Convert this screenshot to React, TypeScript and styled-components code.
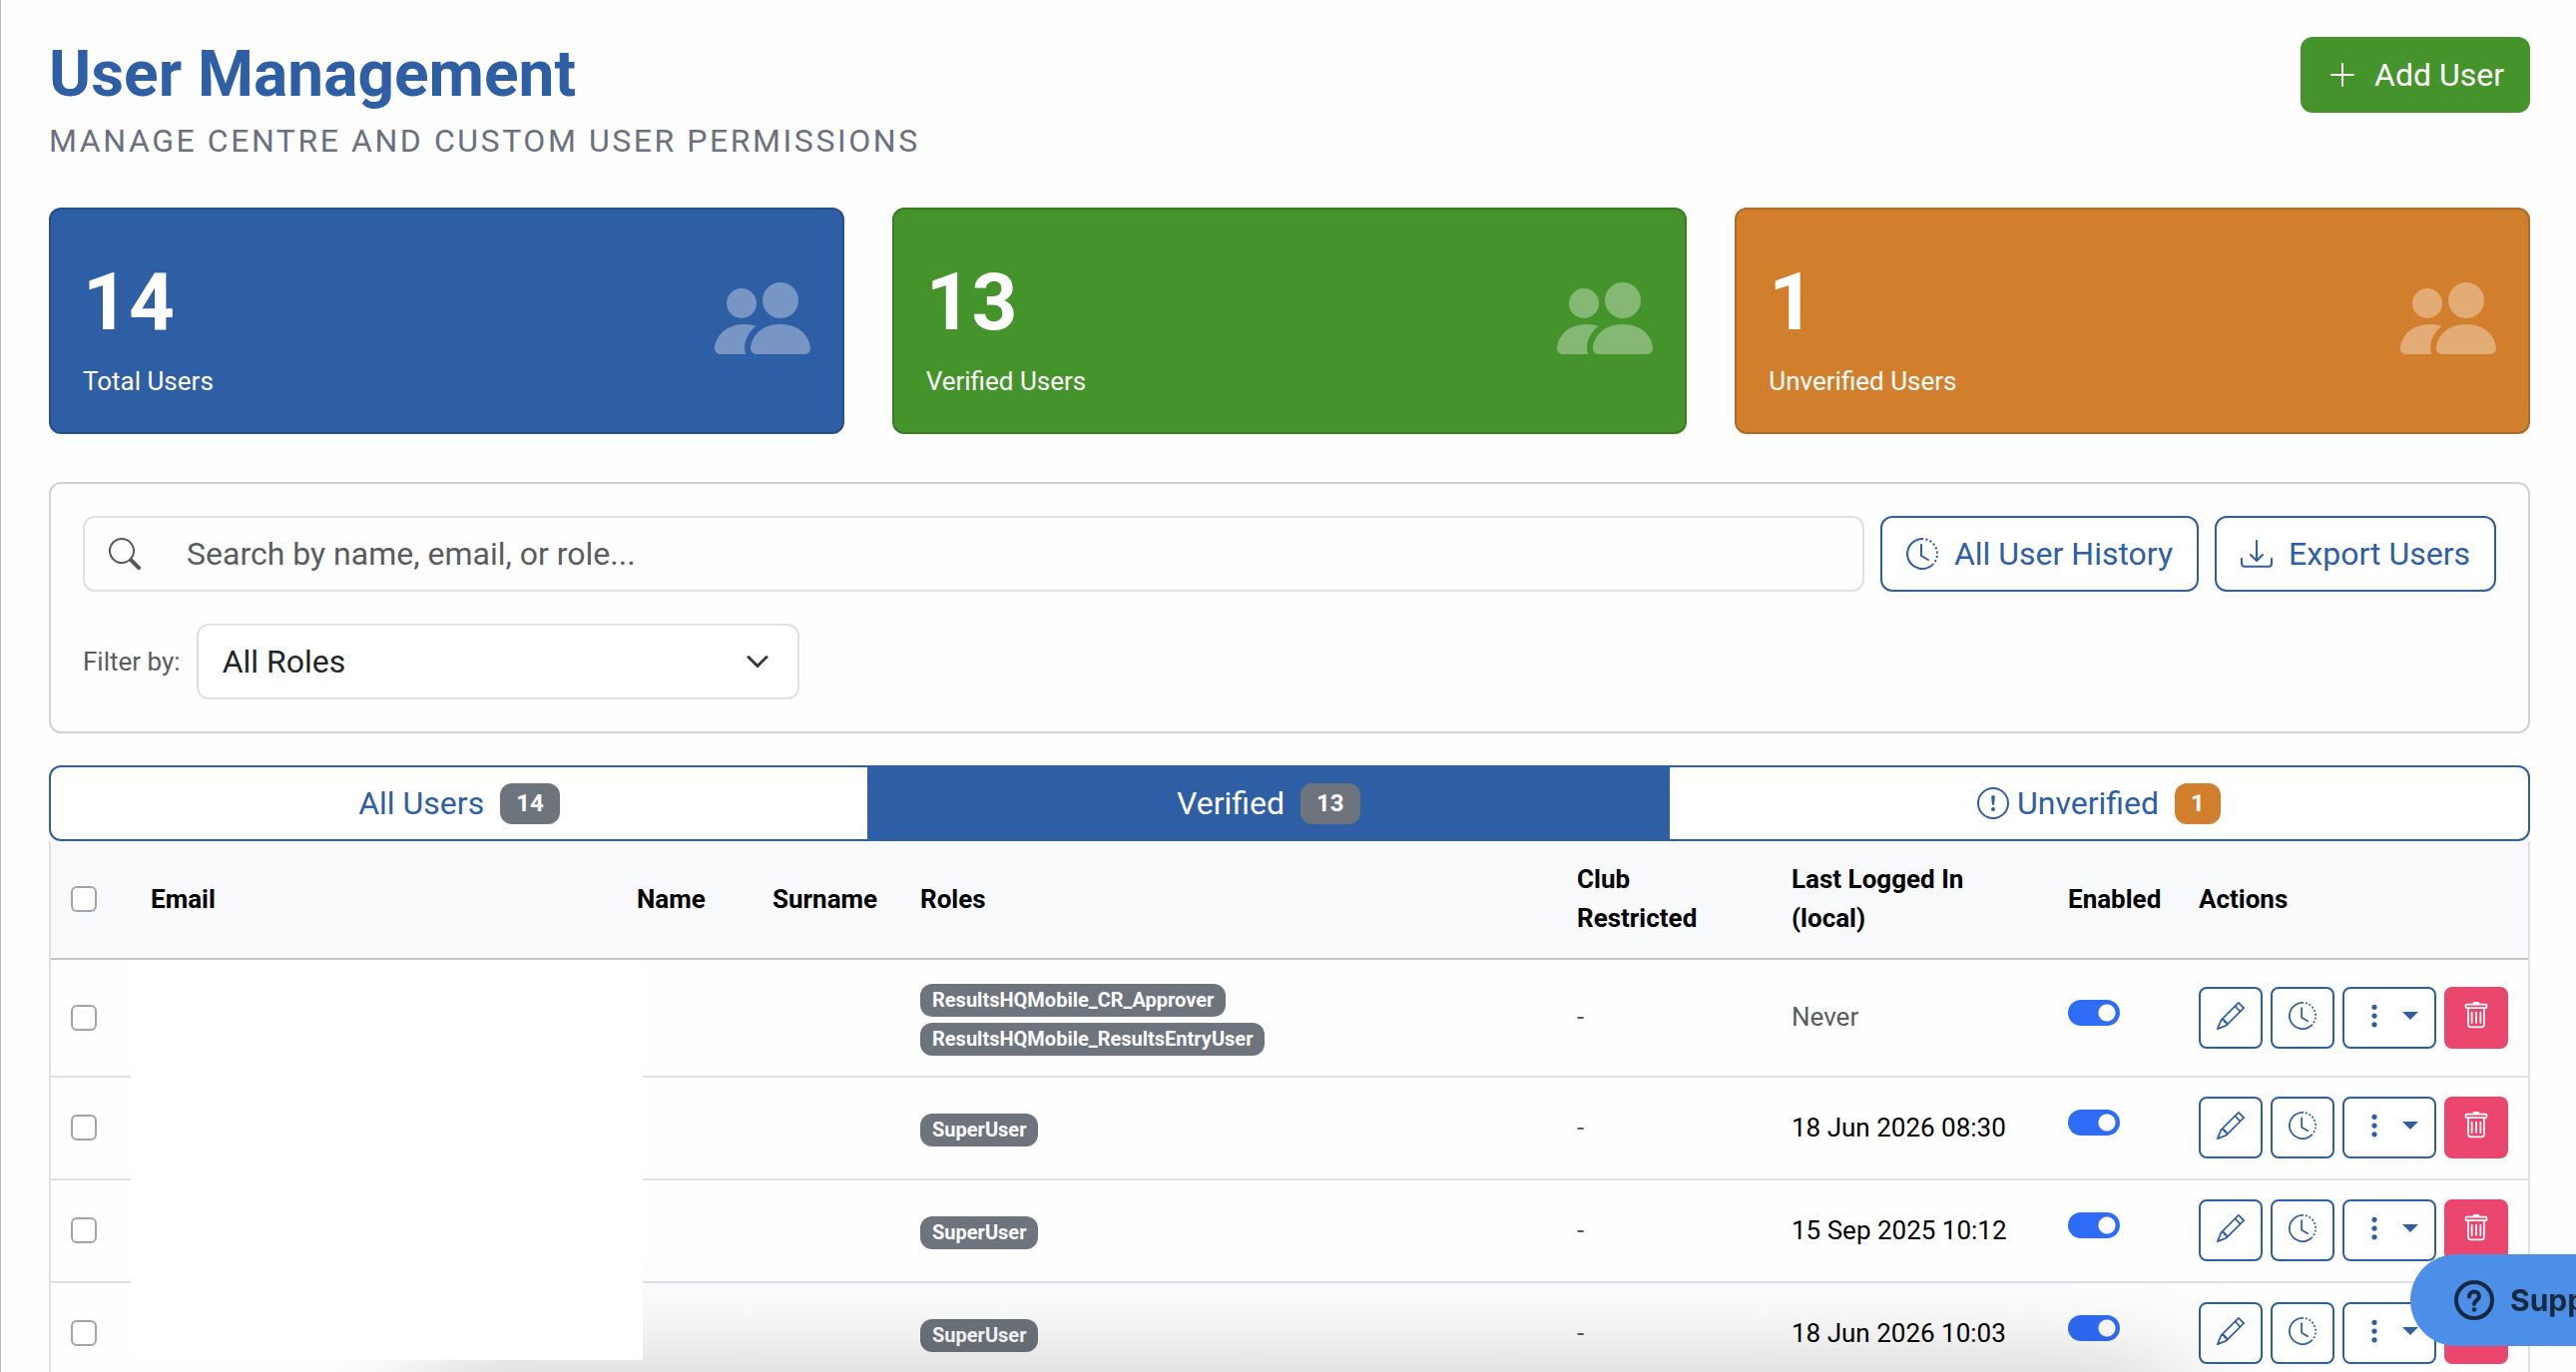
import { useState } from "react";
import styled, { createGlobalStyle } from "styled-components";
import {
  BsClockHistory,
  BsDownload,
  BsExclamationCircle,
  BsPencil,
  BsPeopleFill,
  BsPlusLg,
  BsSearch,
  BsThreeDotsVertical,
  BsTrash,
} from "react-icons/bs";

type User = {
  id: number;
  roles: string[];
  lastLogin: string | null;
};

const stats = [
  { value: 14, label: "Total Users", color: "#2e5ea3", border: "#264f8b" },
  { value: 13, label: "Verified Users", color: "#45932b", border: "#387b22" },
  { value: 1, label: "Unverified Users", color: "#d17f2d", border: "#ad6a28" },
];

const users: User[] = [
  {
    id: 1,
    roles: ["ResultsHQMobile_CR_Approver", "ResultsHQMobile_ResultsEntryUser"],
    lastLogin: null,
  },
  { id: 2, roles: ["SuperUser"], lastLogin: "18 Jun 2026 08:30" },
  { id: 3, roles: ["SuperUser"], lastLogin: "15 Sep 2025 10:12" },
  { id: 4, roles: ["SuperUser"], lastLogin: "18 Jun 2026 10:03" },
];

const App = () => {
  const [tab, setTab] = useState("verified");

  return (
    <PageStyled>
      <GlobalStyle />
      <HeaderStyled>
        <div>
          <TitleStyled>User Management</TitleStyled>
          <SubtitleStyled>Manage centre and custom user permissions</SubtitleStyled>
        </div>
        <AddButtonStyled type="button">
          <BsPlusLg />
          Add User
        </AddButtonStyled>
      </HeaderStyled>

      <StatsStyled>
        {stats.map((stat) => (
          <StatCardStyled key={stat.label} $color={stat.color} $border={stat.border}>
            <div>
              <StatValueStyled>{stat.value}</StatValueStyled>
              <StatLabelStyled>{stat.label}</StatLabelStyled>
            </div>
            <BsPeopleFill />
          </StatCardStyled>
        ))}
      </StatsStyled>

      <FilterPanelStyled>
        <SearchRowStyled>
          <SearchBoxStyled>
            <BsSearch />
            <input type="text" aria-label="Search users" placeholder="Search by name, email, or role..." />
          </SearchBoxStyled>
          <OutlineButtonStyled type="button">
            <BsClockHistory />
            All User History
          </OutlineButtonStyled>
          <OutlineButtonStyled type="button">
            <BsDownload />
            Export Users
          </OutlineButtonStyled>
        </SearchRowStyled>
        <RoleRowStyled>
          <label htmlFor="role">Filter by:</label>
          <SelectWrapStyled>
            <select id="role" defaultValue="all">
              <option value="all">All Roles</option>
              <option value="super">SuperUser</option>
            </select>
            <svg viewBox="0 0 16 16" fill="none" stroke="#343a40" strokeWidth="2">
              <path strokeLinecap="round" strokeLinejoin="round" d="m2 5 6 6 6-6" />
            </svg>
          </SelectWrapStyled>
        </RoleRowStyled>
      </FilterPanelStyled>

      <TabsStyled>
        <TabStyled type="button" $active={tab === "all"} onClick={() => setTab("all")}>
          All Users <TabBadgeStyled>14</TabBadgeStyled>
        </TabStyled>
        <TabStyled type="button" $active={tab === "verified"} onClick={() => setTab("verified")}>
          Verified <TabBadgeStyled>13</TabBadgeStyled>
        </TabStyled>
        <TabStyled type="button" $active={tab === "unverified"} onClick={() => setTab("unverified")}>
          <BsExclamationCircle />
          Unverified <TabBadgeStyled $warning>1</TabBadgeStyled>
        </TabStyled>
      </TabsStyled>

      <TableWrapStyled>
        <TableStyled>
          <colgroup>
            <ColStyled $width={80} />
            <ColStyled $width={487} />
            <ColStyled $width={136} />
            <ColStyled $width={148} />
            <col />
            <ColStyled $width={215} />
            <ColStyled $width={277} />
            <ColStyled $width={131} />
            <ColStyled $width={350} />
          </colgroup>
          <thead>
            <tr>
              <th>
                <CheckboxStyled type="checkbox" aria-label="Select all users" />
              </th>
              <th>Email</th>
              <th>Name</th>
              <th>Surname</th>
              <th>Roles</th>
              <th>
                Club
                <br />
                Restricted
              </th>
              <th>
                Last Logged In
                <br />
                (local)
              </th>
              <th>Enabled</th>
              <th>Actions</th>
            </tr>
          </thead>
          <tbody>
            {users.map((user) => (
              <tr key={user.id}>
                <td>
                  <CheckboxStyled type="checkbox" aria-label={`Select user ${user.id}`} />
                </td>
                <td />
                <td />
                <td />
                <td>
                  <RolesStyled>
                    {user.roles.map((role) => (
                      <RoleBadgeStyled key={role}>{role}</RoleBadgeStyled>
                    ))}
                  </RolesStyled>
                </td>
                <td>
                  <MutedStyled>-</MutedStyled>
                </td>
                <td>{user.lastLogin ?? <MutedStyled>Never</MutedStyled>}</td>
                <td>
                  <SwitchStyled
                    type="checkbox"
                    role="switch"
                    aria-label={`User ${user.id} enabled`}
                    defaultChecked
                  />
                </td>
                <td>
                  <ActionsStyled>
                    <ActionButtonStyled type="button" aria-label="Edit">
                      <BsPencil />
                    </ActionButtonStyled>
                    <ActionButtonStyled type="button" aria-label="History">
                      <BsClockHistory />
                    </ActionButtonStyled>
                    <ActionButtonStyled type="button" aria-label="More">
                      <BsThreeDotsVertical />
                      <CaretStyled />
                    </ActionButtonStyled>
                    <ActionButtonStyled type="button" aria-label="Delete" $danger>
                      <BsTrash />
                    </ActionButtonStyled>
                  </ActionsStyled>
                </td>
              </tr>
            ))}
          </tbody>
        </TableStyled>
        <EmailMaskStyled />
      </TableWrapStyled>

      <BottomShadeStyled />
      <SupportButtonStyled type="button">
        <svg viewBox="0 0 40 40" fill="none" stroke="currentColor" strokeWidth="4">
          <circle cx="20" cy="20" r="18" />
          <path strokeLinecap="round" d="M15 16.5c0-3 2.2-5 5-5s5 2 5 4.600c0 4-5 4-5 7.900" />
          <circle cx="20" cy="29.500" r="2.200" fill="currentColor" stroke="none" />
        </svg>
        Support
      </SupportButtonStyled>
    </PageStyled>
  );
};

const GlobalStyle = createGlobalStyle`
  * {
    box-sizing: border-box;
  }
  html, body {
    margin: 0;
    height: 100%;
    overflow: hidden;
  }
  #root {
    height: 100%;
  }
  body, button, input, select {
    font-family: Roboto, sans-serif;
  }
`;

const PageStyled = styled.main`
  height: 100%;
  padding: 37px 46px 0 48px;
  overflow: hidden;
  background-color: #fefefe;
  border-left: 1px solid #a9c3d3;
`;

const HeaderStyled = styled.header`
  display: flex;
  align-items: flex-start;
  justify-content: space-between;
  margin-bottom: 43px;
`;

const TitleStyled = styled.h1`
  margin: 0;
  color: #2e5ea3;
  font-size: 64px;
  font-weight: 700;
  line-height: 76px;
`;

const SubtitleStyled = styled.p`
  margin: 4px 0 0;
  color: #6b7080;
  font-size: 32px;
  line-height: 48px;
  letter-spacing: 0.08em;
  text-transform: uppercase;
`;

const AddButtonStyled = styled.button`
  display: flex;
  align-items: center;
  gap: 16px;
  height: 76px;
  padding: 0 26px;
  border: none;
  border-radius: 12px;
  background-color: #45932b;
  color: #ffffff;
  font-size: 32px;
  svg {
    width: 32px;
    height: 32px;
  }
`;

const StatsStyled = styled.section`
  display: grid;
  grid-template-columns: repeat(3, 1fr);
  gap: 48px;
  margin-bottom: 48px;
`;

const StatCardStyled = styled.div<{ $color: string; $border: string }>`
  display: flex;
  align-items: flex-start;
  justify-content: space-between;
  height: 227px;
  padding: 45px 32px 0;
  border: 2px solid ${(props) => props.$border};
  border-radius: 12px;
  background-color: ${(props) => props.$color};
  color: #ffffff;
  svg {
    width: 96px;
    height: 96px;
    margin-top: 16px;
    opacity: 0.35;
  }
`;

const StatValueStyled = styled.div`
  font-size: 80px;
  font-weight: 700;
  line-height: 96px;
`;

const StatLabelStyled = styled.div`
  margin-top: 12px;
  font-size: 26px;
  line-height: 39px;
`;

const FilterPanelStyled = styled.section`
  display: flex;
  flex-direction: column;
  gap: 32px;
  margin-bottom: 32px;
  padding: 32px;
  border: 2px solid #d0d1d3;
  border-radius: 12px;
`;

const SearchRowStyled = styled.div`
  display: flex;
  gap: 16px;
`;

const SearchBoxStyled = styled.div`
  display: flex;
  flex: 1;
  align-items: center;
  gap: 46px;
  height: 76px;
  padding: 0 24px;
  border: 2px solid #dee0e6;
  border-radius: 12px;
  color: #55595c;
  svg {
    width: 32px;
    height: 32px;
  }
  input {
    flex: 1;
    padding: 0;
    border: none;
    outline: none;
    background: none;
    font-size: 32px;
  }
  input::placeholder {
    color: #595c5f;
    opacity: 1;
  }
`;

const OutlineButtonStyled = styled.button`
  display: flex;
  align-items: center;
  gap: 16px;
  height: 76px;
  padding: 0 24px;
  border: 2px solid #2e5ea3;
  border-radius: 12px;
  background-color: #ffffff;
  color: #2e5ea3;
  font-size: 32px;
  svg {
    width: 32px;
    height: 32px;
  }
`;

const RoleRowStyled = styled.div`
  display: flex;
  align-items: center;
  gap: 16px;
  label {
    color: #595c5f;
    font-size: 26px;
  }
`;

const SelectWrapStyled = styled.div`
  display: grid;
  align-items: center;
  width: 604px;
  select {
    grid-area: 1 / 1;
    height: 76px;
    padding: 0 24px;
    border: 2px solid #dee0e6;
    border-radius: 12px;
    appearance: none;
    background-color: #ffffff;
    color: #212529;
    font-size: 32px;
  }
  svg {
    grid-area: 1 / 1;
    justify-self: end;
    width: 24px;
    height: 24px;
    margin-right: 30px;
    pointer-events: none;
  }
`;

const TabsStyled = styled.div`
  display: flex;
`;

const TabStyled = styled.button<{ $active: boolean }>`
  display: flex;
  flex: 1 1 auto;
  align-items: center;
  justify-content: center;
  height: 76px;
  padding: 0 26px;
  border: 2px solid #2e5ea3;
  background-color: ${(props) => (props.$active ? "#2e5ea3" : "#ffffff")};
  color: ${(props) => (props.$active ? "#ffffff" : "#2e5ea3")};
  font-size: 32px;
  &:first-child {
    border-radius: 12px 0 0 12px;
  }
  &:last-child {
    border-radius: 0 12px 12px 0;
  }
  & + & {
    margin-left: -2px;
  }
  svg {
    width: 32px;
    height: 32px;
    margin-right: 8px;
  }
`;

const TabBadgeStyled = styled.span<{ $warning?: boolean }>`
  margin-left: 16px;
  padding: 8px 16px;
  border-radius: 12px;
  background-color: ${(props) => (props.$warning ? "#d17f2d" : "#6d747c")};
  color: #ffffff;
  font-size: 24px;
  font-weight: 700;
  line-height: 25px;
`;

const TableWrapStyled = styled.div`
  position: relative;
  border: 2px solid #dfe0e6;
  border-width: 0 2px;
`;

const TableStyled = styled.table`
  width: 100%;
  border-collapse: separate;
  border-spacing: 0;
  table-layout: fixed;
  color: #000000;
  font-size: 26px;
  line-height: 39px;
  th,
  td {
    padding: 19px 20px 20px;
    border-bottom: 2px solid #dfe0e6;
    text-align: left;
    vertical-align: middle;
  }
  th {
    border-bottom-color: #c5c6c8;
    background-color: #f8f9fb;
    font-weight: 700;
  }
`;

const ColStyled = styled.col<{ $width: number }>`
  width: ${(props) => props.$width}px;
`;

const CheckboxStyled = styled.input`
  display: block;
  width: 26px;
  height: 26px;
  margin: 0;
  border: 2px solid #9fa3b0;
  border-radius: 6px;
  appearance: none;
  background-color: #ffffff;
`;

const RolesStyled = styled.div`
  display: flex;
  flex-direction: column;
  align-items: flex-start;
  gap: 6px;
  padding-top: 5px;
`;

const RoleBadgeStyled = styled.span`
  padding: 6px 12px 7px;
  border-radius: 12px;
  background-color: #6d747c;
  color: #ffffff;
  font-size: 20px;
  font-weight: 700;
  line-height: 20px;
`;

const MutedStyled = styled.span`
  color: #595c5f;
`;

const SwitchStyled = styled.input`
  display: block;
  width: 52px;
  height: 26px;
  margin: 0 0 10px;
  border-radius: 26px;
  appearance: none;
  background: radial-gradient(circle at 39px 13px, #ffffff 8px, #2f6cf6 9px);
`;

const ActionsStyled = styled.div`
  display: flex;
  gap: 8px;
`;

const ActionButtonStyled = styled.button<{ $danger?: boolean }>`
  display: flex;
  align-items: center;
  gap: 14px;
  height: 62px;
  padding: 0 16px 4px;
  border: 2px solid ${(props) => (props.$danger ? "#ea466e" : "#2e5ea3")};
  border-radius: 8px;
  background-color: ${(props) => (props.$danger ? "#ea466e" : "#ffffff")};
  color: ${(props) => (props.$danger ? "#ffffff" : "#2e5ea3")};
  svg {
    width: 28px;
    height: 28px;
  }
`;

const CaretStyled = styled.span`
  border: 8px solid transparent;
  border-top-color: currentColor;
  border-bottom: none;
`;

const EmailMaskStyled = styled.div`
  position: absolute;
  z-index: 2;
  top: 120px;
  left: 80px;
  width: 513px;
  height: 400px;
  background-color: #ffffff;
`;

const BottomShadeStyled = styled.div`
  position: fixed;
  z-index: 1;
  right: 410px;
  bottom: -80px;
  left: 430px;
  height: 50px;
  box-shadow: 0 0 120px 10px rgba(0, 0, 0, 0.35);
  pointer-events: none;
`;

const SupportButtonStyled = styled.button`
  position: fixed;
  z-index: 3;
  right: -54px;
  bottom: 26px;
  display: flex;
  align-items: center;
  gap: 16px;
  width: 220px;
  height: 92px;
  padding: 0 0 0 44px;
  border: none;
  border-radius: 46px;
  background-color: #4b8fe8;
  color: #17293f;
  font-family: Inter, sans-serif;
  font-size: 30px;
  font-weight: 700;
  svg {
    flex: none;
    width: 40px;
    height: 40px;
  }
`;

export default App;
